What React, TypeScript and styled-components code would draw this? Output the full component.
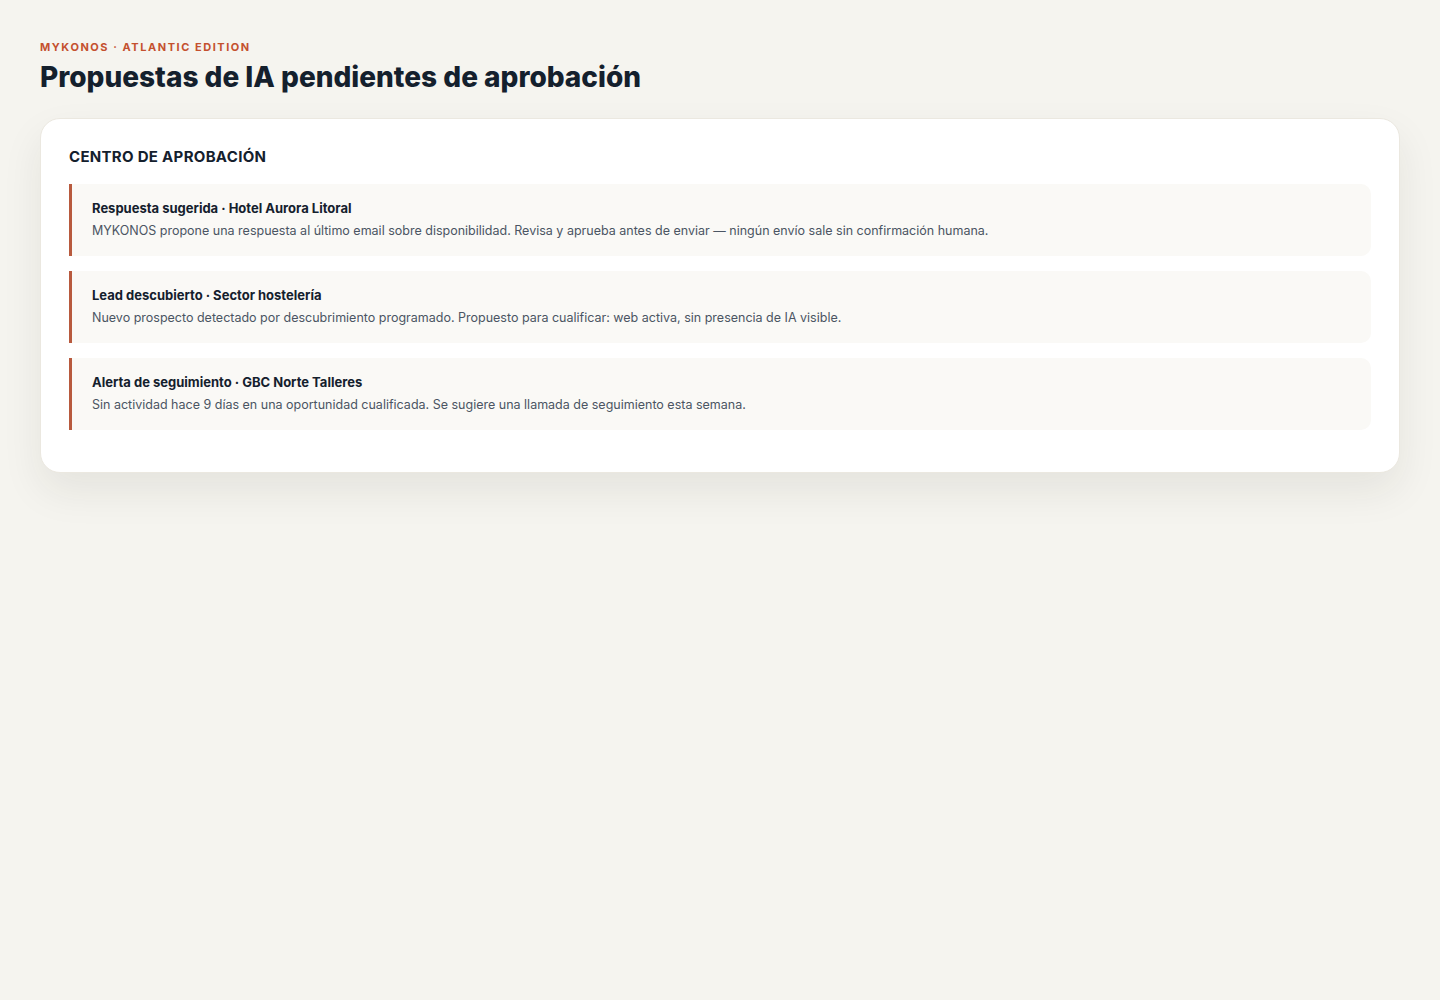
import styled, { createGlobalStyle } from "styled-components";

interface IProposal {
  key: string;
  title: string;
  body: string;
}

const proposals: IProposal[] = [
  {
    key: "reply",
    title: "Respuesta sugerida · Hotel Aurora Litoral",
    body: "MYKONOS propone una respuesta al último email sobre disponibilidad. Revisa y aprueba antes de enviar — ningún envío sale sin confirmación humana.",
  },
  {
    key: "lead",
    title: "Lead descubierto · Sector hostelería",
    body: "Nuevo prospecto detectado por descubrimiento programado. Propuesto para cualificar: web activa, sin presencia de IA visible.",
  },
  {
    key: "followup",
    title: "Alerta de seguimiento · GBC Norte Talleres",
    body: "Sin actividad hace 9 días en una oportunidad cualificada. Se sugiere una llamada de seguimiento esta semana.",
  },
];

const GlobalStyle = createGlobalStyle`
  html {
    overflow-y: scroll;
  }
  body {
    margin: 0;
    background: #f5f4ef;
    font-family: Inter, "Liberation Sans", sans-serif;
    color: #14202d;
  }
`;

const App = () => {
  return (
    <>
      <GlobalStyle />
      <PageStyled>
        <Eyebrow>MYKONOS · ATLANTIC EDITION</Eyebrow>
        <PageTitle>Propuestas de IA pendientes de aprobación</PageTitle>
        <CardStyled>
          <CardTitle>CENTRO DE APROBACIÓN</CardTitle>
          <ProposalList>
            {proposals.map((item) => (
              <ProposalItem key={item.key}>
                <ProposalTitle>{item.title}</ProposalTitle>
                <ProposalBody>{item.body}</ProposalBody>
              </ProposalItem>
            ))}
          </ProposalList>
        </CardStyled>
      </PageStyled>
    </>
  );
};

export default App;

const PageStyled = styled.main`
  width: 100vw;
  min-height: 100vh;
  box-sizing: border-box;
  padding: 40px;
`;

const Eyebrow = styled.div`
  font-size: 11px;
  line-height: 14px;
  font-weight: 700;
  letter-spacing: 0.14em;
  color: #c4502e;
`;

const PageTitle = styled.h1`
  margin: 6px 0 24px;
  font-size: 28px;
  line-height: 34px;
  font-weight: 800;
  letter-spacing: 0;
  color: #14202d;
`;

const CardStyled = styled.section`
  background: #ffffff;
  border: 1px solid #ebe8e0;
  border-radius: 20px;
  padding: 28px 28px 42px;
  box-shadow: 0 18px 40px rgba(40, 34, 20, 0.08);
`;

const CardTitle = styled.h2`
  margin: 0 0 17px;
  font-size: 15px;
  line-height: 20px;
  font-weight: 700;
  letter-spacing: 0.02em;
  color: #14202d;
`;

const ProposalList = styled.div`
  display: flex;
  flex-direction: column;
  gap: 15px;
`;

const ProposalItem = styled.div`
  background: #faf9f6;
  border-left: 3px solid #b85a3e;
  border-radius: 0 10px 10px 0;
  padding: 15px 20px 16px;
  display: flex;
  flex-direction: column;
  gap: 5px;
`;

const ProposalTitle = styled.div`
  font-size: 13px;
  line-height: 18px;
  font-weight: 700;
  color: #14202d;
`;

const ProposalBody = styled.div`
  font-size: 12.5px;
  line-height: 18px;
  color: #4b5563;
`;
